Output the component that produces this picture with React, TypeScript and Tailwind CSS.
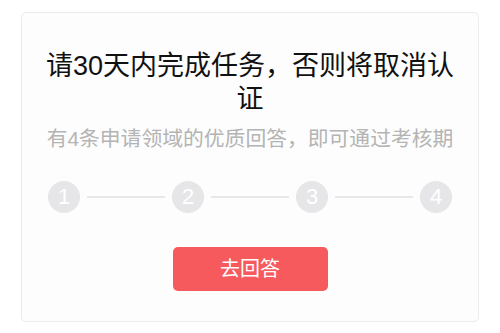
import React from "react";

const font = { fontFamily: '"Liberation Sans", "Noto Sans CJK SC", sans-serif' };

function Step({ n }: { n: number }) {
  return (
    <div className="w-[32px] h-[32px] rounded-full bg-[#e6e6e8] flex items-center justify-center text-white text-[22px] leading-none shrink-0">
      {n}
    </div>
  );
}

function Line() {
  return <div className="h-[2px] w-[78px] bg-[#e8e8ea]" />;
}

export default function App() {
  return (
    <div className="w-[500px] h-[333px] bg-white pt-[12px] pl-[21px]" style={font}>
      <div className="w-[458px] h-[310px] border border-[#ececec] rounded-[5px] bg-[#fdfdfd] flex flex-col items-center pt-[37px]">
        <div className="w-[420px] text-center text-[27px] leading-[33px] text-[#111] font-normal">
          请30天内完成任务，否则将取消认证
        </div>
        <div className="mt-[9px] text-[20.8px] leading-[28px] text-[#b4b4b4] whitespace-nowrap">
          有4条申请领域的优质回答，即可通过考核期
        </div>
        <div className="mt-[28px] flex items-center gap-[7px]">
          <Step n={1} />
          <Line />
          <Step n={2} />
          <Line />
          <Step n={3} />
          <Line />
          <Step n={4} />
        </div>
        <button className="mt-[34px] w-[155px] h-[44px] rounded-[5px] bg-[#f65a5d] text-white text-[20px] flex items-center justify-center">
          去回答
        </button>
      </div>
    </div>
  );
}
